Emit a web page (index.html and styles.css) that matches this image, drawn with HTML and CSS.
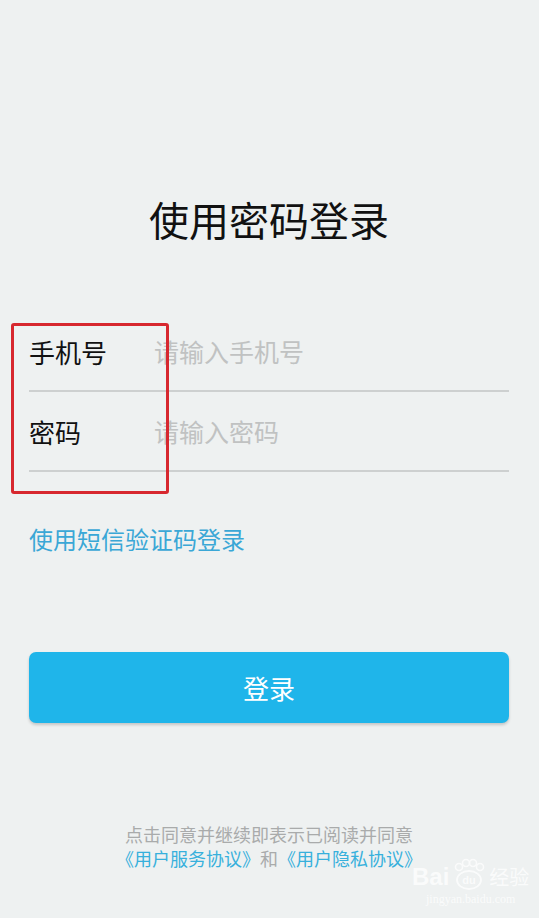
FILE: index.html
```html
<!DOCTYPE html>
<html lang="zh-CN">
<head>
    <meta charset="UTF-8">
    <meta name="viewport" content="width=device-width, initial-scale=1.0">
    <title>使用密码登录</title>
    <link rel="stylesheet" href="styles.css">
</head>
<body>
    <div class="page">
        <h1 class="title">使用密码登录</h1>

        <form class="form">
            <div class="field">
                <label for="phone">手机号</label>
                <input type="text" id="phone" placeholder="请输入手机号">
            </div>
            <div class="field">
                <label for="pwd">密码</label>
                <input type="password" id="pwd" placeholder="请输入密码">
            </div>
            <div class="mark"></div>
        </form>

        <a href="#" class="sms-link">使用短信验证码登录</a>

        <button class="login-btn">登录</button>

        <div class="agree">
            <p class="agree-text">点击同意并继续即表示已阅读并同意</p>
            <p class="agree-links"><a href="#">《用户服务协议》</a>和<a href="#">《用户隐私协议》</a></p>
        </div>

        <div class="watermark">
            <div class="wm-logo">
                <span>Bai</span>
                <svg width="36" height="32" viewBox="0 0 36 32">
                    <circle cx="8" cy="9" r="3.5" fill="none" stroke="#fff" stroke-width="1.6"/>
                    <circle cx="15" cy="5" r="3.5" fill="none" stroke="#fff" stroke-width="1.6"/>
                    <circle cx="22" cy="5" r="3.5" fill="none" stroke="#fff" stroke-width="1.6"/>
                    <circle cx="29" cy="9" r="3.5" fill="none" stroke="#fff" stroke-width="1.6"/>
                    <ellipse cx="18" cy="22" rx="12" ry="9" fill="none" stroke="#fff" stroke-width="1.8"/>
                    <text x="18" y="26" text-anchor="middle" font-size="11" fill="#fff" font-family="Liberation Sans, sans-serif">du</text>
                </svg>
                <span class="wm-cn">经验</span>
            </div>
            <div class="wm-url">jingyan.baidu.com</div>
        </div>
    </div>
</body>
</html>
```

FILE: styles.css
```css
* { box-sizing: border-box; }
body {
    margin: 0;
    background: #eef1f1;
    font-family: "Noto Sans CJK SC", "Noto Sans", sans-serif;
}
.page {
    position: relative;
    height: 918px;
    padding: 0 30px 0 29px;
    overflow: hidden;
}
.title {
    margin: 0;
    padding-top: 195px;
    font-size: 40px;
    line-height: 48px;
    font-weight: 400;
    color: #111;
    text-align: center;
}
.form {
    position: relative;
    margin-top: 69px;
}
.field {
    display: flex;
    align-items: center;
    height: 80px;
    border-bottom: 2px solid #cdd0d0;
}
.field label {
    width: 125px;
    font-size: 26px;
    color: #111;
}
.field input {
    flex: 1;
    border: none;
    outline: none;
    background: transparent;
    font-family: inherit;
    font-size: 25px;
    color: #333;
    padding: 0;
}
.field input::placeholder { color: #c0c2c2; }
.mark {
    position: absolute;
    left: -18px;
    top: 11px;
    width: 158px;
    height: 171px;
    border: 3px solid #d7282f;
    border-radius: 3px;
}
.sms-link {
    display: block;
    margin-top: 52px;
    font-size: 24px;
    line-height: 30px;
    color: #3aa7d6;
    text-decoration: none;
}
.login-btn {
    display: block;
    width: 100%;
    height: 71px;
    margin-top: 98px;
    border: none;
    border-radius: 7px;
    background: #1fb5ea;
    box-shadow: 0 2px 3px rgba(0, 0, 0, 0.18);
    color: #fff;
    font-family: inherit;
    font-size: 26px;
}
.agree {
    margin-top: 99px;
    text-align: center;
    font-size: 18px;
    line-height: 24px;
}
.agree p { margin: 0; }
.agree-text { color: #a9abab; }
.agree-links { color: #a9abab; }
.agree-links a {
    color: #37b0dc;
    text-decoration: none;
}
.watermark {
    position: absolute;
    left: 412px;
    top: 858px;
    color: #fff;
    opacity: 0.75;
}
.wm-logo {
    display: flex;
    align-items: flex-end;
    gap: 2px;
    font-family: "Liberation Sans", sans-serif;
    font-size: 24px;
    font-weight: 700;
    line-height: 26px;
}
.wm-cn {
    font-family: "Noto Sans CJK SC", sans-serif;
    font-size: 20px;
    font-weight: 400;
}
.wm-url {
    font-family: "Liberation Serif", serif;
    font-size: 12px;
    margin-top: 2px;
    padding-left: 14px;
}
```
